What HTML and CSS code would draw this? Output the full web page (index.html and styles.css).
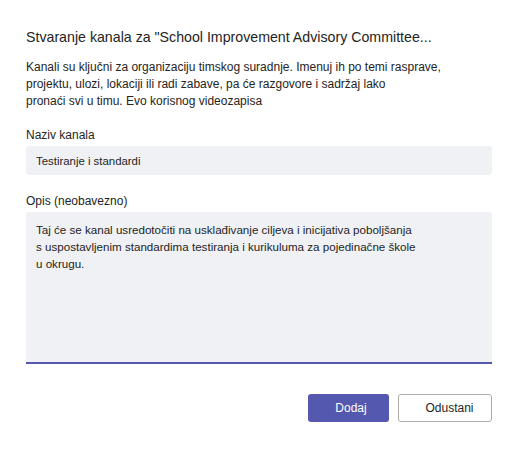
FILE: index.html
```html
<!DOCTYPE html>
<html lang="hr">
<head>
  <meta charset="UTF-8">
  <meta name="viewport" content="width=device-width, initial-scale=1.0">
  <title>Stvaranje kanala</title>
  <link rel="stylesheet" href="styles.css">
</head>
<body>
  <div class="dialog">
    <h1 class="title">Stvaranje kanala za "School Improvement Advisory Committee...</h1>
    <p class="intro">Kanali su ključni za organizaciju timskog suradnje. Imenuj ih po temi rasprave,<br>projektu, ulozi, lokaciji ili radi zabave, pa će razgovore i sadržaj lako<br>pronaći svi u timu. Evo korisnog videozapisa</p>

    <div class="field">
      <label class="label">Naziv kanala</label>
      <div class="input">Testiranje i standardi</div>
    </div>

    <div class="field">
      <label class="label">Opis (neobavezno)</label>
      <div class="textarea">Taj će se kanal usredotočiti na usklađivanje ciljeva i inicijativa poboljšanja<br>s uspostavljenim standardima testiranja i kurikuluma za pojedinačne škole<br>u okrugu.</div>
    </div>

    <div class="actions">
      <a href="#" class="btn btn-primary">Dodaj</a>
      <a href="#" class="btn btn-secondary">Odustani</a>
    </div>
  </div>
</body>
</html>
```

FILE: styles.css
```css
* {
  margin: 0;
  padding: 0;
  box-sizing: border-box;
}

body {
  background: #fff;
  color: #252423;
  font-family: 'Liberation Sans', Arial, sans-serif;
}

.dialog {
  width: 520px;
  height: 449px;
  padding: 27px 28px 0 26px;
}

.title {
  font-size: 14.2px;
  font-weight: normal;
  line-height: 20px;
  color: #252423;
}

.intro {
  margin-top: 12px;
  font-size: 12px;
  line-height: 17px;
  color: #252423;
}

.field {
  margin-top: 17px;
}

.field + .field {
  margin-top: 18px;
}

.label {
  display: block;
  font-size: 12px;
  line-height: 16px;
  color: #252423;
  margin-bottom: 3px;
}

.input {
  height: 29px;
  background: #eff1f5;
  border-radius: 3px;
  padding: 0 10px;
  display: flex;
  align-items: center;
  font-size: 11.4px;
}

.textarea {
  height: 152px;
  background: #eff1f5;
  border-radius: 3px 3px 0 0;
  border-bottom: 2px solid #5558af;
  padding: 9px 10px;
  font-size: 11.6px;
  line-height: 17px;
}

.actions {
  display: flex;
  justify-content: flex-end;
  gap: 9px;
  margin-top: 30px;
}

.btn {
  display: flex;
  align-items: center;
  justify-content: center;
  height: 28px;
  border-radius: 3px;
  font-size: 12px;
  text-decoration: none;
}

.btn-primary {
  width: 81px;
  padding-left: 5px;
  background: #5558af;
  color: #fff;
}

.btn-secondary {
  width: 94px;
  padding-left: 9px;
  background: #fff;
  color: #252423;
  border: 1px solid #aeacaa;
}
```
